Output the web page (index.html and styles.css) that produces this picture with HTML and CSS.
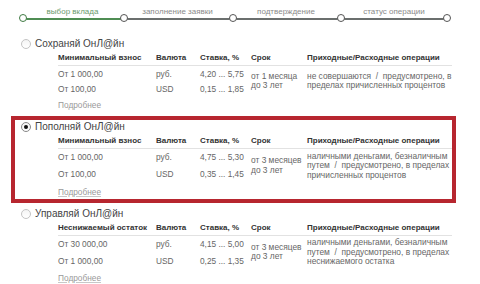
FILE: index.html
```html
<!DOCTYPE html>
<html lang="ru">
<head>
    <meta charset="UTF-8">
    <meta name="viewport" content="width=device-width, initial-scale=1.0">
    <title>Выбор вклада</title>
    <link rel="stylesheet" href="styles.css">
</head>
<body>
    <div class="steps">
        <div class="step done"><span class="step-label">выбор вклада</span></div>
        <div class="step"><span class="step-label">заполнение заявки</span></div>
        <div class="step"><span class="step-label">подтверждение</span></div>
        <div class="step last"><span class="step-label">статус операции</span></div>
    </div>

    <div class="deposit">
        <div class="deposit-title"><span class="radio"></span>Сохраняй ОнЛ@йн</div>
        <table class="rates">
            <tr>
                <th class="col-sum">Минимальный взнос</th>
                <th class="col-cur">Валюта</th>
                <th class="col-rate">Ставка, %</th>
                <th class="col-term">Срок</th>
                <th>Приходные/Расходные операции</th>
            </tr>
            <tr>
                <td>От 1 000,00</td>
                <td>руб.</td>
                <td>4,20 ... 5,75</td>
                <td rowspan="2" class="multi">от 1 месяца<br>до 3 лет</td>
                <td rowspan="2" class="multi">не совершаются &nbsp;/&nbsp; предусмотрено, в<br>пределах причисленных процентов</td>
            </tr>
            <tr>
                <td>От 100,00</td>
                <td>USD</td>
                <td>0,15 ... 1,85</td>
            </tr>
        </table>
        <a class="more plain" href="#">Подробнее</a>
    </div>

    <div class="deposit active">
        <div class="deposit-title"><span class="radio checked"></span>Пополняй ОнЛ@йн</div>
        <table class="rates">
            <tr>
                <th class="col-sum">Минимальный взнос</th>
                <th class="col-cur">Валюта</th>
                <th class="col-rate">Ставка, %</th>
                <th class="col-term">Срок</th>
                <th>Приходные/Расходные операции</th>
            </tr>
            <tr>
                <td>От 1 000,00</td>
                <td>руб.</td>
                <td>4,75 ... 5,30</td>
                <td rowspan="2" class="multi">от 3 месяцев<br>до 3 лет</td>
                <td rowspan="2" class="multi">наличными деньгами, безналичным<br>путем &nbsp;/&nbsp; предусмотрено, в пределах<br>причисленных процентов</td>
            </tr>
            <tr>
                <td>От 100,00</td>
                <td>USD</td>
                <td>0,35 ... 1,45</td>
            </tr>
        </table>
        <a class="more" href="#">Подробнее</a>
    </div>

    <div class="deposit">
        <div class="deposit-title"><span class="radio"></span>Управляй ОнЛ@йн</div>
        <table class="rates">
            <tr>
                <th class="col-sum">Неснижаемый остаток</th>
                <th class="col-cur">Валюта</th>
                <th class="col-rate">Ставка, %</th>
                <th class="col-term">Срок</th>
                <th>Приходные/Расходные операции</th>
            </tr>
            <tr>
                <td>От 30 000,00</td>
                <td>руб.</td>
                <td>4,15 ... 5,00</td>
                <td rowspan="2" class="multi">от 3 месяцев<br>до 3 лет</td>
                <td rowspan="2" class="multi">наличными деньгами, безналичным<br>путем &nbsp;/&nbsp; предусмотрено, в пределах<br>неснижаемого остатка</td>
            </tr>
            <tr>
                <td>От 1 000,00</td>
                <td>USD</td>
                <td>0,25 ... 1,35</td>
            </tr>
        </table>
        <a class="more" href="#">Подробнее</a>
    </div>
</body>
</html>
```

FILE: styles.css
```css
* {
    box-sizing: border-box;
    font-family: "Liberation Sans", Arial, sans-serif;
}

body {
    margin: 0;
    background-color: #ffffff;
    color: #555;
}

/* шаги оформления */
.steps {
    display: grid;
    grid-template-columns: 101px 109px 108px 108px;
    margin-left: 22px;
    height: 33px;
    padding-top: 7px;
}

.step {
    position: relative;
    height: 13px;
    border-bottom: 2px solid #6b6f6e;
    text-align: center;
}

.step.done {
    border-bottom-color: #4f8d53;
}

.step-label {
    display: block;
    font-size: 8px;
    line-height: 10px;
    color: #8a8a8a;
}

.step.done .step-label {
    color: #6a9a6c;
}

.step::before,
.step.last::after {
    content: "";
    position: absolute;
    left: -3px;
    bottom: -4px;
    width: 6px;
    height: 6px;
    border: 1px solid #555;
    border-radius: 50%;
    background: #fff;
}

.step.done::before {
    border-color: #3f7a43;
}

.step.last::after {
    left: auto;
    right: -3px;
}

/* вклады */
.deposit {
    width: 445px;
    margin-left: 11px;
    padding: 1px 0 2px 6px;
    border: 4px solid transparent;
}

.deposit.active {
    border-color: #b7262f;
}

.deposit-title {
    display: flex;
    align-items: center;
    gap: 4px;
    font-size: 10px;
    line-height: 12px;
    color: #444;
}

.radio {
    width: 10px;
    height: 10px;
    border: 1px solid #c4c4c4;
    border-radius: 50%;
    background: linear-gradient(#f4f4f4, #fff);
    position: relative;
}

.radio.checked {
    border-color: #888;
}

.radio.checked::after {
    content: "";
    position: absolute;
    left: 2px;
    top: 2px;
    width: 4px;
    height: 4px;
    border-radius: 50%;
    background: #111;
}

.rates {
    margin-left: 37px;
    width: 394px;
    border-collapse: collapse;
    font-size: 8.3px;
    line-height: 10px;
}

.rates th {
    text-align: left;
    font-weight: bold;
    font-size: 8px;
    color: #333;
    padding: 3px 0 2px;
    border-bottom: 1px solid #e2e2e2;
    white-space: nowrap;
}

.rates td {
    padding: 2.5px 0;
    color: #666;
    vertical-align: middle;
}

.rates td.multi {
    font-size: 8.4px;
    line-height: 9.5px;
}

.col-sum { width: 98px; }
.col-cur { width: 44px; }
.col-rate { width: 51px; }
.col-term { width: 56px; }

.more {
    display: block;
    width: max-content;
    margin: 4px 0 0 37px;
    font-size: 8.3px;
    line-height: 10px;
    color: #9a9a9a;
    text-decoration: underline;
    text-decoration-color: #c8c8c8;
}

.more.plain {
    text-decoration: none;
}
```
